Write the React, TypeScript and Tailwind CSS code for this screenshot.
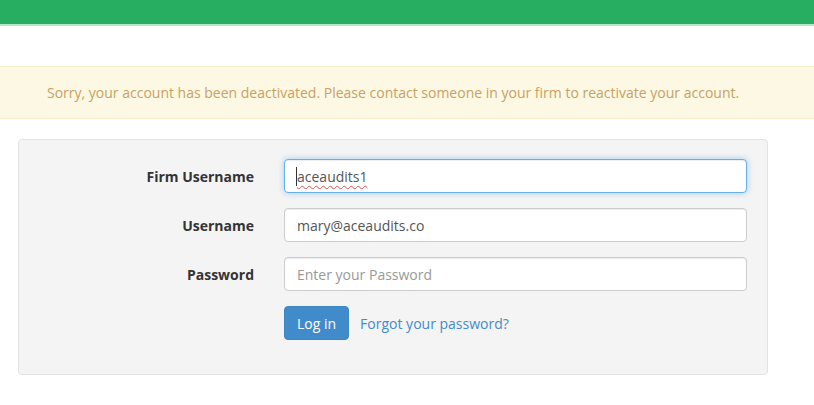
import React from "react";

const font = { fontFamily: '"Open Sans", "Noto Sans", sans-serif' };

const inputBase =
  "w-full h-[34px] px-[12px] bg-white border rounded-[4px] text-[14px] text-[#555] outline-none";

export default function App() {
  return (
    <div className="min-h-screen bg-white text-[14px] text-[#333]" style={font}>
      {/* top bar */}
      <div className="h-[26px] bg-[#27ae60] border-b-2 border-[#b5e4c7]" />

      <div className="pt-[40px]">
        {/* alert */}
        <div className="h-[53px] bg-[#fcf8e3] border-y border-[#faebcc] flex items-center pl-[47px] text-[14px] text-[#c9a164]">
          Sorry, your account has been deactivated. Please contact someone in your firm to reactivate your account.
        </div>

        {/* login well */}
        <div className="mt-[20px] ml-[18px] w-[750px] bg-[#f4f4f4] border border-[#e3e3e3] rounded-[4px] pt-[19px] pb-[34px] pr-[20px]">
          <form className="flex flex-col gap-[15px]" onSubmit={(e) => e.preventDefault()}>
            <div className="flex items-center">
              <label className="w-[235px] text-right font-bold">Firm Username</label>
              <div className="relative ml-[30px] flex-1">
                <input
                  defaultValue="aceaudits1"
                  className={`${inputBase} border-[#66afe9] shadow-[inset_0_1px_1px_rgba(0,0,0,0.075),0_0_6px_rgba(102,175,233,0.6)]`}
                />
                {/* spellcheck squiggle + caret */}
                <span className="absolute left-[13px] top-0 h-full flex items-center pointer-events-none text-transparent underline decoration-wavy decoration-[#e05050] decoration-1 underline-offset-[3px]">
                  aceaudits1
                </span>
                <span className="absolute left-[12px] top-[8px] h-[19px] w-px bg-[#333] pointer-events-none" />
              </div>
            </div>
            <div className="flex items-center">
              <label className="w-[235px] text-right font-bold">Username</label>
              <div className="ml-[30px] flex-1">
                <input
                  defaultValue="mary@aceaudits.co"
                  className={`${inputBase} border-[#ccc] shadow-[inset_0_1px_1px_rgba(0,0,0,0.075)]`}
                />
              </div>
            </div>
            <div className="flex items-center">
              <label className="w-[235px] text-right font-bold">Password</label>
              <div className="ml-[30px] flex-1">
                <input
                  type="password"
                  placeholder="Enter your Password"
                  className={`${inputBase} border-[#ccc] placeholder:text-[#999] shadow-[inset_0_1px_1px_rgba(0,0,0,0.075)]`}
                />
              </div>
            </div>
            <div className="flex items-center ml-[265px] gap-[11px]">
              <button
                type="submit"
                className="h-[34px] px-[12px] bg-[#428bca] border border-[#3d86c6] rounded-[4px] text-white text-[14px]"
              >
                Log in
              </button>
              <a href="#" className="text-[#428bca]">
                Forgot your password?
              </a>
            </div>
          </form>
        </div>
      </div>
    </div>
  );
}
